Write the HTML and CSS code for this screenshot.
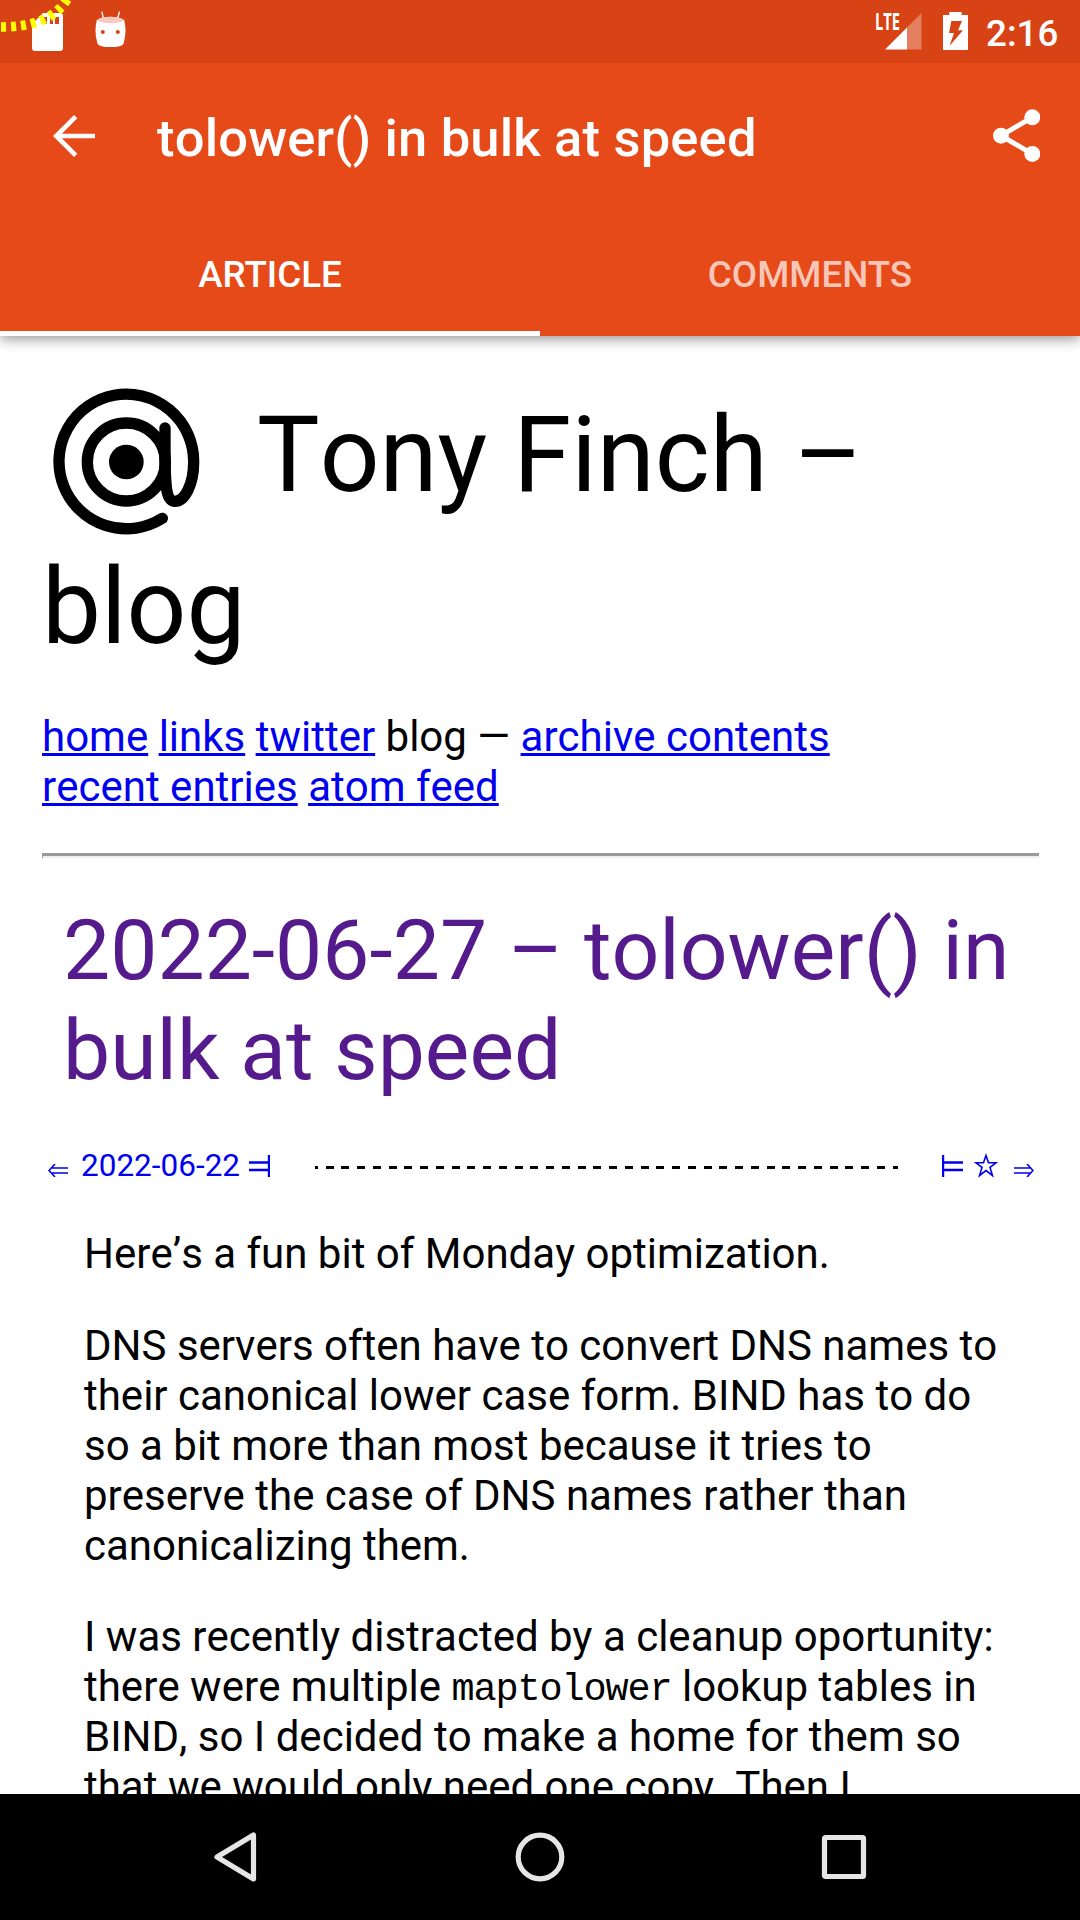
FILE: index.html
```html
<!DOCTYPE html>
<html lang="en">
<head>
<meta charset="utf-8">
<title>tolower() in bulk at speed</title>
<link rel="stylesheet" href="styles.css">
</head>
<body>
<div class="screen">
  <header class="header">
    <div class="status">
      <svg class="debug-arc" viewBox="0 0 216 99" fill="none" stroke="#ff0" stroke-width="29" stroke-dasharray="15 15"><path d="M3 81C85 81 165 62 203 -6"/></svg>
      <svg class="sd" viewBox="0 0 31 38"><path fill="#fff" fill-rule="evenodd" d="M11 0H28a3 3 0 0 1 3 3V35a3 3 0 0 1-3 3H3a3 3 0 0 1-3-3V11zM12 4V11H15V4zM18 4V11H21V4zM23 4V11H27V4z"/></svg>
      <svg class="droid" viewBox="0 0 92 110"><path d="M20 2l5 22M73 2l-6 22" stroke="#fff" stroke-width="4"/><path fill="#fff" d="M5 27Q46 8 87 27Q96 62 85 98Q80 108 46 108Q12 108 7 98Q-4 62 5 27z"/><ellipse cx="46" cy="27" rx="38" ry="10" fill="#f6cabd"/><circle cx="23" cy="63" r="6" fill="#d84315"/><circle cx="68" cy="63" r="6" fill="#d84315"/></svg>
      <span class="grow"></span>
      <svg class="signal" viewBox="0 0 46 37"><path fill="#e47f5f" d="M45.500 0V36.500H31V14.500z"/><path fill="#fff" d="M31 14.500V36.500H9z"/><text x="-1" y="16.500" textLength="25" lengthAdjust="spacingAndGlyphs">LTE</text></svg>
      <svg class="battery" viewBox="0 0 75 114"><path fill="#fff" fill-rule="evenodd" d="M19 0H56V9H75V114H0V9H19zM25 27L18 63H33L20 101L60 55H45L57 27z"/></svg>
      <span class="clock">2:16</span>
    </div>
    <div class="toolbar">
      <svg class="back" viewBox="0 0 126 126" fill="none" stroke="#fff" stroke-width="14"><path d="M126 63H10M68 5L10 63L68 121"/></svg>
      <span class="title">tolower() in bulk at speed</span>
      <svg class="share" viewBox="0 0 142 160" fill="#fff"><path d="M118 25L24 80L118 135" fill="none" stroke="#fff" stroke-width="15"/><circle cx="118" cy="25" r="24"/><circle cx="24" cy="80" r="24"/><circle cx="118" cy="135" r="24"/></svg>
    </div>
    <nav class="tabs"><span class="tab active">ARTICLE</span><span class="tab">COMMENTS</span></nav>
  </header>

  <main class="page">
    <h1><svg class="logo" viewBox="60 50 450 450" fill="none" stroke="#000" stroke-width="34" stroke-linecap="round"><circle cx="289" cy="275" r="117"/><path d="M397 444A202 202 0 1 1 491 275C491 345 463 393 435 393C405 393 407 330 405 275V173"/><circle cx="289" cy="275" r="52" fill="#000" stroke="none"/></svg>Tony Finch –<br>blog</h1>
    <p class="links"><a href="#">home</a> <a href="#">links</a> <a href="#">twitter</a> blog — <a href="#">archive contents</a><br><a href="#">recent entries</a> <a href="#">atom feed</a></p>
    <div class="rule"></div>
    <h2>2022-06-27 – tolower() in<br>bulk at speed</h2>
    <div class="pager">
      <svg class="arrow" viewBox="0 0 20 13"><path d="M20 4H4M20 9H4M7 0L1 6.500L7 13"/></svg>
      <span class="date">2022-06-22</span>
      <svg class="turnstile" viewBox="0 0 21 22"><path d="M20 0V22M0 7.500H20M0 15H20"/></svg>
      <span class="dashes"></span>
      <svg class="turnstile" viewBox="0 0 21 22"><path d="M1 0V22M1 7.500H21M1 15H21"/></svg>
      <svg class="star" viewBox="0 0 24 25"><path d="M12 2.500L14.500 9.800H22L16 14.400L18.500 22.500L12 17.600L5.500 22.500L8 14.400L2 9.800H9.500z"/></svg>
      <svg class="arrow" viewBox="0 0 20 13"><path d="M0 4H16M0 9H16M13 0L19 6.500L13 13"/></svg>
    </div>
    <article class="article">
      <p>Here’s a fun bit of Monday optimization.</p>
      <p>DNS servers often have to convert DNS names to<br>their canonical lower case form. BIND has to do<br>so a bit more than most because it tries to<br>preserve the case of DNS names rather than<br>canonicalizing them.</p>
      <p>I was recently distracted by a cleanup oportunity:<br>there were multiple <code>maptolower</code> lookup tables in<br>BIND, so I decided to make a home for them so<br>that we would only need one copy. Then I</p>
    </article>
  </main>

  <footer class="navbar">
    <svg viewBox="0 0 50 50"><path d="M42.500 3V47L6 25z"/></svg>
    <svg viewBox="0 0 50 50"><circle cx="25" cy="25" r="21.800"/></svg>
    <svg viewBox="0 0 50 50"><rect x="5.500" y="5.500" width="39" height="39" rx="1"/></svg>
  </footer>
</div>
</body>
</html>
```
FILE: styles.css
```css
* { box-sizing: border-box; }
body { margin: 0; font-family: Roboto, sans-serif; font-kerning: none; background: #fff; color: #000; }
svg { display: block; flex: none; }
.screen { width: 1080px; height: 1920px; display: flex; flex-direction: column; overflow: hidden; }

.header { flex: none; height: 336px; background: #e64a19; color: #fff; box-shadow: 0 3px 12px rgba(0, 0, 0, .42); z-index: 1; }
.status { position: relative; height: 63px; background: #d84315; display: flex; align-items: flex-start; padding: 12px 21px 0 32px; }
.debug-arc { position: absolute; left: 0; top: 0; width: 72px; height: 33px; z-index: 1; }
.sd { width: 31px; height: 38px; margin-top: 1px; }
.droid { width: 31px; height: 36.700px; margin: -1px 0 0 32px; }
.grow { flex: 1; }
.signal { width: 46px; height: 37px; margin: 1px 21px 0 0; overflow: visible; }
.signal text { font: 700 23px "Open Sans", sans-serif; fill: #fff; }
.battery { width: 25px; height: 38px; }
.clock { font-size: 36.750px; font-weight: 500; line-height: 43px; width: 73px; margin-left: 18px; white-space: nowrap; }
.toolbar { height: 147px; display: flex; align-items: center; padding: 0 40px 0 53px; }
.back { width: 42px; height: 42px; margin-top: -1px; }
.title { flex: 1; margin: 3px 0 0 62px; font-size: 52.500px; font-weight: 500; line-height: 62px; letter-spacing: .180px; white-space: nowrap; }
.share { width: 47.300px; height: 53.300px; margin-top: -2px; }
.tabs { height: 126px; display: flex; }
.tab { flex: 1; text-align: center; font-size: 36.750px; font-weight: 500; line-height: 129px; height: 126px; color: rgba(255, 255, 255, .7); font-kerning: normal; }
.tab.active { color: #fff; border-bottom: 5px solid #fff; }

.page { flex: 1; min-height: 0; overflow: hidden; padding: 43.700px 41px 0 42px; font-size: 42px; line-height: 49.875px; }
h1, h2, p { margin: 0; font-weight: 400; white-space: nowrap; }
h1 { font-size: 105px; line-height: 152.300px; }
.logo { display: inline-block; vertical-align: top; width: 150px; height: 150px; margin: 7.300px 57px -10px 8px; }
.links { margin-top: 28px; }
a { color: #00e; text-decoration-thickness: 2.600px; }
.rule { height: 5px; margin-top: 41px; border: solid #9a9a9a; border-width: 3px 0 0 1px; box-shadow: inset 0 -2px #eee; }
h2 { margin: 43px 0 0 21px; font-size: 84px; line-height: 99.750px; color: #551a8b; }
.pager { height: 50px; margin-top: 40px; padding: 0 4px 0 6px; display: flex; align-items: center; color: #00e; }
.pager svg { fill: none; stroke: #00e; stroke-width: 1.600; }
.arrow { width: 20px; height: 13px; margin-top: 9px; }
.date { flex: none; font-size: 31.500px; width: 168px; margin-left: 13px; }
.pager .turnstile { width: 21px; height: 22px; stroke-width: 2.400; }
.dashes { flex: none; width: 583px; height: 3px; margin: 3px 44px 0 45px; background: repeating-linear-gradient(90deg, #000 0 7.875px, transparent 7.875px 15.750px) -5px 0 / 600px 3px; }
.star { width: 24px; height: 25px; margin: 0 16px 0 11px; }
.article { margin: 38.600px 0 0 42px; }
.article p + p { margin-top: 42px; }
code { font: 38.500px "Liberation Mono", monospace; line-height: 0; letter-spacing: -1.100px; position: relative; top: -1px; }

.navbar { flex: none; height: 126px; background: #000; display: flex; align-items: center; justify-content: center; gap: 254px; }
.navbar svg { width: 50px; height: 50px; fill: none; stroke: #e6e6e6; stroke-width: 5.200; stroke-linejoin: round; }
```
